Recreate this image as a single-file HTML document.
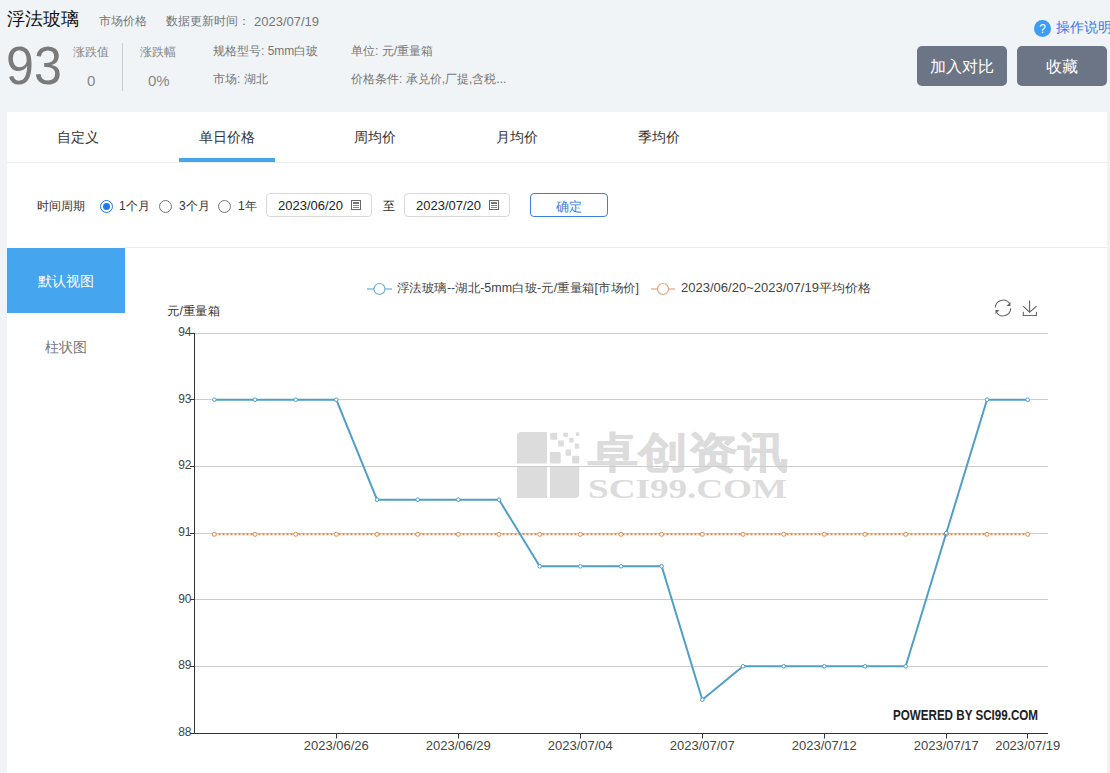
<!DOCTYPE html>
<html><head><meta charset="utf-8">
<style>
*{margin:0;padding:0;box-sizing:border-box}
html,body{width:1110px;height:773px;overflow:hidden}
body{background:#f0f4f7;font-family:"Liberation Sans",sans-serif;position:relative;color:#666}
.a{position:absolute;white-space:nowrap;line-height:1}
.panel{position:absolute;left:7px;top:112px;width:1100px;height:661px;background:#fff}
.btn{position:absolute;top:46px;height:40px;width:90px;background:#6b7585;border-radius:5px;color:#fff;font-size:16px;text-align:center;line-height:42px}
.tab{position:absolute;top:130px;font-size:14px;color:#333;line-height:1}
.radio{position:absolute;top:200px;width:13px;height:13px;border-radius:50%;border:1px solid #767676;background:#fff}
.inp{position:absolute;top:193px;width:106px;height:24px;border:1px solid #d9d9d9;border-radius:4px;background:#fff}
.inp span{position:absolute;left:11px;top:5px;font-size:13px;color:#222;line-height:1}
.cal{position:absolute;left:84px;top:6px;width:10px;height:10px;border:1px solid #555}
.cal{border-color:#666}.cal:before{content:"";position:absolute;left:1px;right:1px;top:1px;height:2px;background:#777}.cal:after{content:"";position:absolute;left:1px;right:1px;top:4px;height:1px;background:#888;box-shadow:0 2px 0 #888}
</style></head><body>
<div class="a" style="left:7px;top:10px;font-size:18px;color:#111">浮法玻璃</div>
<div class="a" style="left:99px;top:15px;font-size:12px;color:#777">市场价格</div>
<div class="a" style="left:166px;top:15px;font-size:12px;color:#777">数据更新时间：</div>
<div class="a" style="left:254px;top:15px;font-size:13px;color:#777">2023/07/19</div>
<div class="a" style="left:6px;top:37.5px;font-size:54px;color:#7a7a7a;transform:scaleX(0.93);transform-origin:0 0">93</div>
<div class="a" style="left:73px;top:46px;font-size:12px;color:#888">涨跌值</div>
<div class="a" style="left:87px;top:73px;font-size:15px;color:#888">0</div>
<div class="a" style="left:122px;top:43px;width:1px;height:48px;background:#ccc"></div>
<div class="a" style="left:140px;top:46px;font-size:12px;color:#888">涨跌幅</div>
<div class="a" style="left:148px;top:73px;font-size:15px;color:#888">0%</div>
<div class="a" style="left:213px;top:45px;font-size:12px;color:#777">规格型号: 5mm白玻</div>
<div class="a" style="left:213px;top:73px;font-size:12px;color:#777">市场: 湖北</div>
<div class="a" style="left:351px;top:45px;font-size:12px;color:#777">单位: 元/重量箱</div>
<div class="a" style="left:351px;top:73px;font-size:12px;color:#777">价格条件: 承兑价,厂提,含税...</div>
<div class="a" style="left:1034px;top:20px;width:17px;height:17px;border-radius:50%;background:#3d9cf5;color:#fff;font-size:12px;text-align:center;line-height:18px">?</div>
<div class="a" style="left:1056px;top:20px;font-size:14px;color:#3574f0">操作说明</div>
<div class="btn" style="left:917px">加入对比</div>
<div class="btn" style="left:1017px">收藏</div>

<div class="panel"></div>
<div class="tab" style="left:57px">自定义</div>
<div class="tab" style="left:199px">单日价格</div>
<div class="tab" style="left:354px">周均价</div>
<div class="tab" style="left:496px">月均价</div>
<div class="tab" style="left:638px">季均价</div>
<div class="a" style="left:179px;top:158px;width:96px;height:4px;background:#46a5ef"></div>
<div class="a" style="left:7px;top:162px;width:1100px;height:1px;background:#eeeeee"></div>

<div class="a" style="left:37px;top:200px;font-size:12px;color:#333">时间周期</div>
<div class="radio" style="left:100px;border-color:#1e78f0"><div style="position:absolute;left:2px;top:2px;width:7px;height:7px;border-radius:50%;background:#1e78f0"></div></div>
<div class="a" style="left:119px;top:200px;font-size:12px;color:#333">1个月</div>
<div class="radio" style="left:159px"></div>
<div class="a" style="left:179px;top:200px;font-size:12px;color:#333">3个月</div>
<div class="radio" style="left:218px"></div>
<div class="a" style="left:238px;top:200px;font-size:12px;color:#333">1年</div>
<div class="inp" style="left:266px"><span>2023/06/20</span><div class="cal"></div></div>
<div class="a" style="left:383px;top:200px;font-size:12px;color:#222">至</div>
<div class="inp" style="left:404px"><span>2023/07/20</span><div class="cal"></div></div>
<div class="a" style="left:530px;top:193px;width:78px;height:24px;border:1px solid #3a80e0;border-radius:4px;color:#3a80e0;font-size:13px;text-align:center;line-height:26px">确定</div>
<div class="a" style="left:125px;top:247px;width:982px;height:1px;background:#eeeeee"></div>

<div class="a" style="left:7px;top:248px;width:118px;height:65px;background:#46a5ef;color:#fff;font-size:14px;text-align:center;line-height:66px">默认视图</div>
<div class="a" style="left:7px;top:340px;width:118px;font-size:14px;color:#777;text-align:center">柱状图</div>

<svg class="a" style="left:0;top:0" width="1110" height="773" viewBox="0 0 1110 773">
<g fill="#dcdcdc">
<path d="M521 432h26v31.5h-30v-27.5a4 4 0 0 1 4-4z"/>
<rect x="517" y="467" width="30" height="31"/>
<path d="M550 467h29.2v27a4 4 0 0 1 -4 4h-25.2z"/>
<rect x="550.2" y="432.8" width="7" height="7" rx="1"/>
<rect x="563.3" y="432.8" width="4.7" height="4.1" rx="0.8"/>
<rect x="575.9" y="432.2" width="3.3" height="3.7" rx="0.6"/>
<rect x="558.1" y="440.5" width="5.7" height="6" rx="1"/>
<rect x="569.2" y="437.9" width="4.5" height="4.5" rx="0.8"/>
<rect x="574.7" y="443.6" width="4.5" height="5.2" rx="0.8"/>
<rect x="549.9" y="451.9" width="10.8" height="11.6" rx="1.2"/>
<rect x="565.6" y="449.5" width="5.5" height="6.2" rx="1"/>
<rect x="572.1" y="455.7" width="7.1" height="7.8" rx="1"/>
<text x="587.5" y="466.5" font-size="42" font-weight="bold" stroke="#dcdcdc" stroke-width="0.6" stroke-linejoin="round" font-family="Liberation Sans, sans-serif" textLength="200" lengthAdjust="spacingAndGlyphs">卓创资讯</text>
<text x="588" y="498" font-size="27" font-weight="bold" font-family="Liberation Serif, serif" textLength="199" lengthAdjust="spacingAndGlyphs">SCI99.COM</text>
</g>
<g stroke="#cccccc" stroke-width="1"><line x1="195" y1="333.5" x2="1048" y2="333.5"/><line x1="195" y1="399.5" x2="1048" y2="399.5"/><line x1="195" y1="466.5" x2="1048" y2="466.5"/><line x1="195" y1="533.5" x2="1048" y2="533.5"/><line x1="195" y1="599.5" x2="1048" y2="599.5"/><line x1="195" y1="666.5" x2="1048" y2="666.5"/></g>
<g stroke="#333" stroke-width="1">
<line x1="194.5" y1="333" x2="194.5" y2="734"/>
<line x1="194" y1="733.5" x2="1048" y2="733.5"/>
<line x1="190" y1="333.5" x2="194.5" y2="333.5"/><line x1="190" y1="399.5" x2="194.5" y2="399.5"/><line x1="190" y1="466.5" x2="194.5" y2="466.5"/><line x1="190" y1="533.5" x2="194.5" y2="533.5"/><line x1="190" y1="599.5" x2="194.5" y2="599.5"/><line x1="190" y1="666.5" x2="194.5" y2="666.5"/><line x1="190" y1="733.5" x2="194.5" y2="733.5"/><line x1="336.5" y1="733.5" x2="336.5" y2="738.5"/><line x1="458.5" y1="733.5" x2="458.5" y2="738.5"/><line x1="580.5" y1="733.5" x2="580.5" y2="738.5"/><line x1="702.5" y1="733.5" x2="702.5" y2="738.5"/><line x1="824.5" y1="733.5" x2="824.5" y2="738.5"/><line x1="946.5" y1="733.5" x2="946.5" y2="738.5"/><line x1="1027.5" y1="733.5" x2="1027.5" y2="738.5"/>
</g>
<g font-family="Liberation Sans, sans-serif" font-size="12" fill="#444" text-anchor="end"><text x="191.5" y="336.0">94</text><text x="191.5" y="402.7">93</text><text x="191.5" y="469.3">92</text><text x="191.5" y="536.0">91</text><text x="191.5" y="602.7">90</text><text x="191.5" y="669.3">89</text><text x="191.5" y="736.0">88</text></g>
<g font-family="Liberation Sans, sans-serif" font-size="13" fill="#444" text-anchor="middle"><text x="336.3" y="750.0">2023/06/26</text><text x="458.3" y="750.0">2023/06/29</text><text x="580.3" y="750.0">2023/07/04</text><text x="702.3" y="750.0">2023/07/07</text><text x="824.3" y="750.0">2023/07/12</text><text x="946.3" y="750.0">2023/07/17</text><text x="1027.7" y="750.0">2023/07/19</text></g>
<text x="167" y="315" font-family="Liberation Sans, sans-serif" font-size="12" fill="#333" textLength="53" lengthAdjust="spacingAndGlyphs">元/重量箱</text>
<line x1="214.5" y1="534.3" x2="1027.7" y2="534.3" stroke="#e0884a" stroke-width="2" stroke-dasharray="2 2"/>
<g fill="#fff" stroke="#e0884a" stroke-width="1"><circle cx="214.3" cy="534.3" r="2"/><circle cx="255.0" cy="534.3" r="2"/><circle cx="295.7" cy="534.3" r="2"/><circle cx="336.3" cy="534.3" r="2"/><circle cx="377.0" cy="534.3" r="2"/><circle cx="417.7" cy="534.3" r="2"/><circle cx="458.3" cy="534.3" r="2"/><circle cx="499.0" cy="534.3" r="2"/><circle cx="539.7" cy="534.3" r="2"/><circle cx="580.3" cy="534.3" r="2"/><circle cx="621.0" cy="534.3" r="2"/><circle cx="661.7" cy="534.3" r="2"/><circle cx="702.3" cy="534.3" r="2"/><circle cx="743.0" cy="534.3" r="2"/><circle cx="783.7" cy="534.3" r="2"/><circle cx="824.3" cy="534.3" r="2"/><circle cx="865.0" cy="534.3" r="2"/><circle cx="905.7" cy="534.3" r="2"/><circle cx="946.3" cy="534.3" r="2"/><circle cx="987.0" cy="534.3" r="2"/><circle cx="1027.7" cy="534.3" r="2"/></g>
<polyline points="214.3,399.7 255.0,399.7 295.7,399.7 336.3,399.7 377.0,499.7 417.7,499.7 458.3,499.7 499.0,499.7 539.7,566.3 580.3,566.3 621.0,566.3 661.7,566.3 702.3,699.7 743.0,666.3 783.7,666.3 824.3,666.3 865.0,666.3 905.7,666.3 946.3,533.0 987.0,399.7 1027.7,399.7" fill="none" stroke="#509fc8" stroke-width="2" stroke-linejoin="round"/>
<g fill="#fff" stroke="#509fc8" stroke-width="1"><circle cx="214.3" cy="399.7" r="1.8"/><circle cx="255.0" cy="399.7" r="1.8"/><circle cx="295.7" cy="399.7" r="1.8"/><circle cx="336.3" cy="399.7" r="1.8"/><circle cx="377.0" cy="499.7" r="1.8"/><circle cx="417.7" cy="499.7" r="1.8"/><circle cx="458.3" cy="499.7" r="1.8"/><circle cx="499.0" cy="499.7" r="1.8"/><circle cx="539.7" cy="566.3" r="1.8"/><circle cx="580.3" cy="566.3" r="1.8"/><circle cx="621.0" cy="566.3" r="1.8"/><circle cx="661.7" cy="566.3" r="1.8"/><circle cx="702.3" cy="699.7" r="1.8"/><circle cx="743.0" cy="666.3" r="1.8"/><circle cx="783.7" cy="666.3" r="1.8"/><circle cx="824.3" cy="666.3" r="1.8"/><circle cx="865.0" cy="666.3" r="1.8"/><circle cx="905.7" cy="666.3" r="1.8"/><circle cx="946.3" cy="533.0" r="1.8"/><circle cx="987.0" cy="399.7" r="1.8"/><circle cx="1027.7" cy="399.7" r="1.8"/></g>
<!-- legend -->
<line x1="367" y1="289" x2="392" y2="289" stroke="#6aaed6" stroke-width="1.2"/>
<circle cx="379.5" cy="289" r="5.5" fill="#fff" stroke="#6aaed6" stroke-width="1.2"/>
<text x="397" y="292" font-family="Liberation Sans, sans-serif" font-size="12" fill="#444" textLength="242" lengthAdjust="spacingAndGlyphs">浮法玻璃--湖北-5mm白玻-元/重量箱[市场价]</text>
<line x1="651" y1="289" x2="675" y2="289" stroke="#eba27a" stroke-width="1.2"/>
<circle cx="663" cy="289" r="5.5" fill="#fff" stroke="#eba27a" stroke-width="1.2"/>
<text x="681" y="292" font-family="Liberation Sans, sans-serif" font-size="12" fill="#444" textLength="190" lengthAdjust="spacingAndGlyphs">2023/06/20~2023/07/19平均价格</text>
<!-- icons -->
<g fill="none" stroke="#666" stroke-width="1.1">
<path d="M995.3 307.5 A7.8 7.8 0 0 1 1009.5 303.5"/>
<path d="M1010.7 308.2 A7.8 7.8 0 0 1 996.5 312.5"/>
<path d="M1023.1 306.2 L1029.6 312.2 L1036.6 306.2 M1029.6 300.5 V312.2 M1023.3 311.8 V315.5 H1036.4 V311.8"/>
</g>
<path d="M1010.5 302 l0 4 -4 0z M995.5 314 l0 -4 4 0z" fill="#666"/>
<text x="893" y="719.8" font-family="Liberation Sans, sans-serif" font-size="14" font-weight="bold" fill="#222" textLength="145" lengthAdjust="spacingAndGlyphs">POWERED BY SCI99.COM</text>
</svg>
</body></html>
